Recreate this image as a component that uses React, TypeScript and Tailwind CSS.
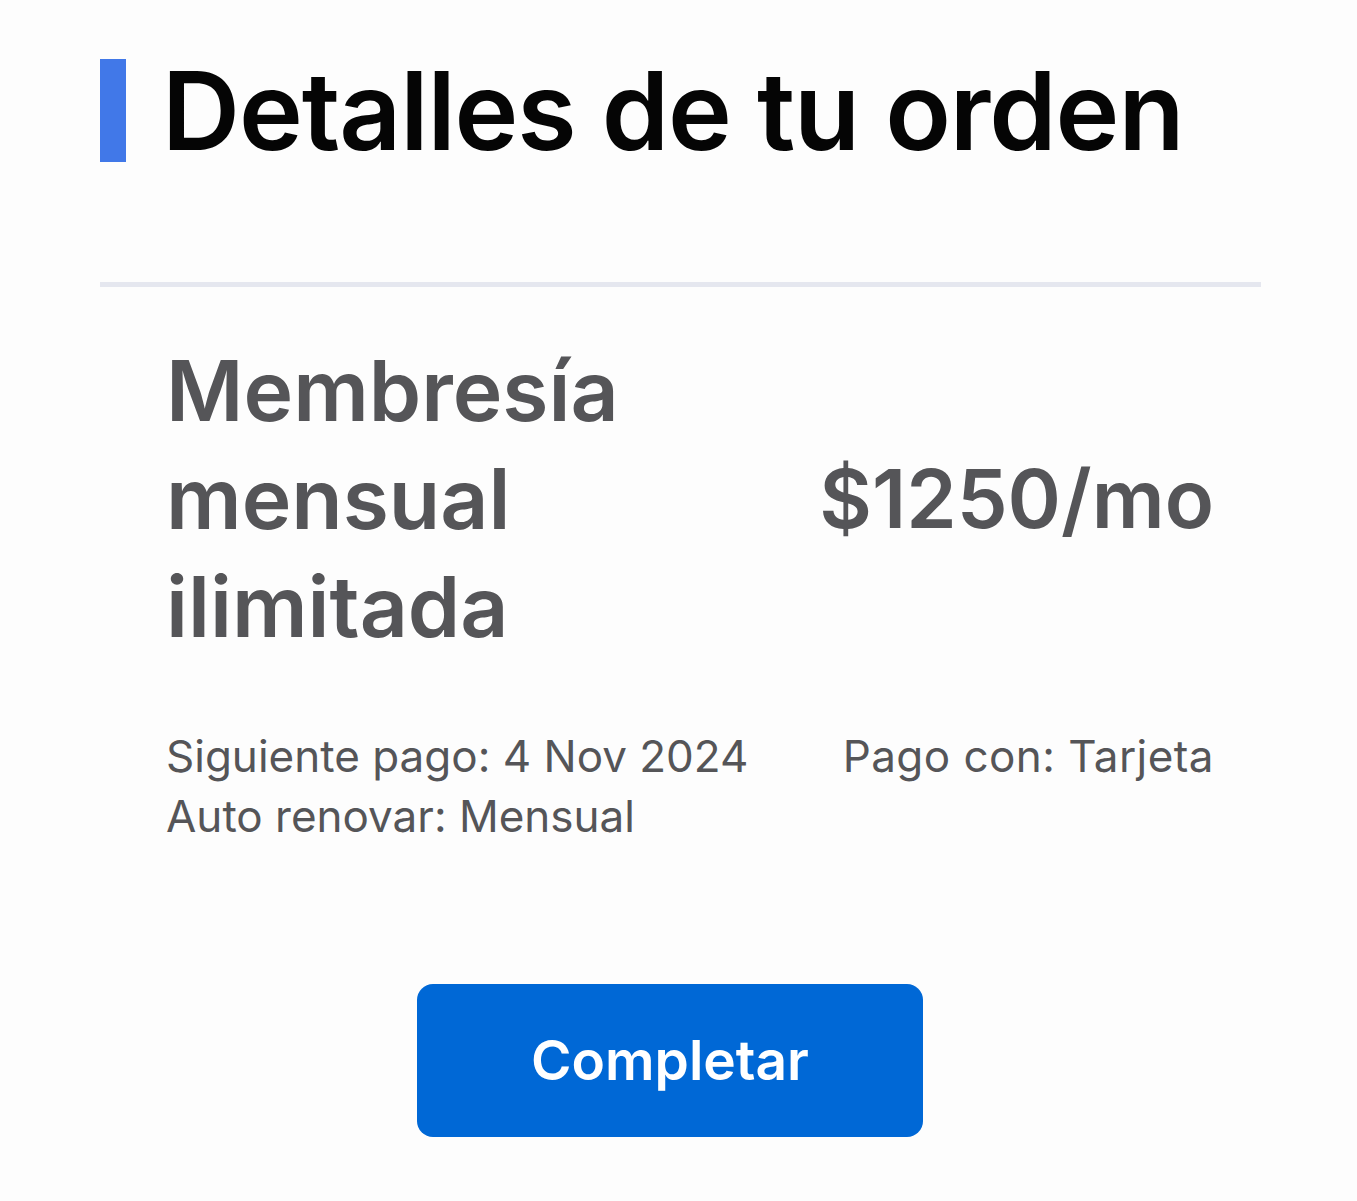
export default function App() {
  return (
    <div className="min-h-screen w-full bg-[#fdfdfd] font-['Inter',sans-serif]">
      <div className="w-[1161px] ml-[100px] pt-[59px]">
        {/* Heading */}
        <div className="flex items-center gap-[36px]">
          <div className="w-[26px] h-[103px] bg-[#4178e8]" />
          <h1 className="text-[108px] leading-[103px] font-semibold tracking-[-0.01em] text-[#050505]">
            Detalles de tu orden
          </h1>
        </div>

        <div className="mt-[120px] h-[5px] bg-[#e5e7ef]" />

        {/* Order line */}
        <div className="pl-[66px] pr-[47px] pt-[50px] flex items-center justify-between">
          <div className="text-[84px] leading-[108px] font-semibold text-[#555558]">
            <div>Membresía</div>
            <div>mensual</div>
            <div>ilimitada</div>
          </div>
          <div className="text-[81px] leading-[108px] font-semibold text-[#555558]">$1250/mo</div>
        </div>

        <div className="pl-[66px] pr-[47px] mt-[65px] flex justify-between text-[44px] leading-[60px] text-[#555558]">
          <div>
            <div>Siguiente pago: 4 Nov 2024</div>
            <div>Auto renovar: Mensual</div>
          </div>
          <div className="tracking-[0.01em]">Pago con: Tarjeta</div>
        </div>

        <div className="mt-[138px] pl-[317px]">
          <button className="w-[506px] h-[153px] rounded-[16px] bg-[#0068d6] text-white text-[55px] font-semibold">
            Completar
          </button>
        </div>
      </div>
    </div>
  )
}
